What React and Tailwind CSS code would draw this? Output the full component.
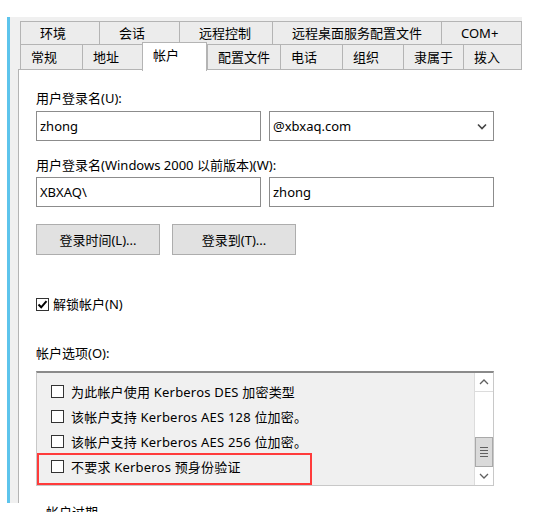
import React from 'react'

const row1 = [
  { label: '环境', w: 'w-[79px]' },
  { label: '会话', w: 'w-[80px]' },
  { label: '远程控制', w: 'w-[93px]' },
  { label: '远程桌面服务配置文件', w: 'w-[169px]' },
  { label: 'COM+', w: 'w-[81px]' },
]

const row2 = [
  { label: '常规', w: 'w-[62px]' },
  { label: '地址', w: 'w-[60px]' },
  { label: '帐户', w: 'w-[65px]', active: true },
  { label: '配置文件', w: 'w-[73px]' },
  { label: '电话', w: 'w-[62px]' },
  { label: '组织', w: 'w-[61px]' },
  { label: '隶属于', w: 'w-[60px]' },
  { label: '拨入', w: 'w-[59px]' },
]

const options = [
  '为此帐户使用 Kerberos DES 加密类型',
  '该帐户支持 Kerberos AES 128 位加密。',
  '该帐户支持 Kerberos AES 256 位加密。',
  '不要求 Kerberos 预身份验证',
]

function Box({ checked }) {
  return (
    <div className="w-[13px] h-[13px] shrink-0 border border-[#333333] bg-white flex items-center justify-center">
      {checked && (
        <svg width="11" height="11" viewBox="0 0 11 11">
          <path d="M1.5 5.5 L4.2 8.3 L9.5 2.2" fill="none" stroke="#000" strokeWidth="2" />
        </svg>
      )}
    </div>
  )
}

function Field({ children, combo }) {
  return (
    <div className="w-[225px] h-[30px] border border-[#8c8c8c] bg-white flex items-center pl-[3px] pr-[6px]">
      <span className="flex-1">{children}</span>
      {combo && (
        <svg width="10" height="7" viewBox="0 0 10 7">
          <path d="M1 1.5 L5 5.5 L9 1.5" fill="none" stroke="#444" strokeWidth="1.6" />
        </svg>
      )}
    </div>
  )
}

function Btn({ children }) {
  return (
    <div className="w-[124px] h-[31px] border border-[#adadad] bg-[#e1e1e1] flex items-center justify-center">
      {children}
    </div>
  )
}

export default function App() {
  return (
    <div
      className="w-[540px] h-[512px] overflow-hidden bg-white text-[13px] text-black leading-[18px]"
      style={{ fontFamily: '"Noto Sans", "Noto Sans CJK SC", sans-serif' }}
    >
      <div className="pt-[17px] pl-[7px] flex items-start">
        <div className="w-[3px] h-[486px] bg-[#5dc4ec]" />
        <div className="w-[512px] h-[486px] bg-[#f0f0f0] pt-[4px]">
          {/* tab rows */}
          <div className="pl-[10px]">
            <div className="flex h-[23px]">
              {row1.map((t, i) => (
                <div
                  key={t.label}
                  className={`${t.w} h-[23px] border-t border-l border-[#b4b4b4] bg-[#ececec] pl-[19px] flex items-center ${i === row1.length - 1 ? 'border-r' : ''}`}
                >
                  {t.label}
                </div>
              ))}
            </div>
            <div className="flex h-[25px] border-t border-[#b4b4b4]">
              {row2.map((t, i) =>
                t.active ? (
                  <div
                    key={t.label}
                    className={`${t.w} h-[29px] -mt-[3px] border-t border-l border-r border-[#b4b4b4] bg-white pl-[10px] pt-[3px] relative z-10`}
                  >
                    {t.label}
                  </div>
                ) : (
                  <div
                    key={t.label}
                    className={`${t.w} h-[24px] border-l border-[#b4b4b4] bg-[#ececec] pl-[10px] flex items-center ${i === row2.length - 1 ? 'border-r' : ''}`}
                  >
                    {t.label}
                  </div>
                )
              )}
            </div>
          </div>

          {/* page */}
          <div className="ml-[8px] h-[434px] bg-white border-l border-t border-[#b4b4b4] pl-[17px] pt-[19px]">
            <div>用户登录名(U):</div>
            <div className="flex gap-[8px] mt-[4px]">
              <Field>zhong</Field>
              <Field combo>@xbxaq.com</Field>
            </div>

            <div className="mt-[15px]">用户登录名(Windows 2000 以前版本)(W):</div>
            <div className="flex gap-[8px] mt-[3px]">
              <Field>XBXAQ\</Field>
              <Field>zhong</Field>
            </div>

            <div className="flex gap-[12px] mt-[17px]">
              <Btn>登录时间(L)...</Btn>
              <Btn>登录到(T)...</Btn>
            </div>

            <div className="flex items-center gap-[4px] mt-[40px] h-[18px]">
              <Box checked />
              <span>解锁帐户(N)</span>
            </div>

            <div className="mt-[31px]">帐户选项(O):</div>

            <div className="relative mt-[9px] w-[458px] h-[115px] bg-[#f0f0f0] border border-[#c8c8c8] border-t-2 border-t-[#8a8a8a] flex overflow-hidden">
              <div className="flex-1 overflow-hidden">
                <div className="-mt-[19px]">
                  <div className="h-[25px] flex items-center pl-[14px]">
                    <Box />
                  </div>
                  {options.map((o) => (
                    <div key={o} className="h-[25px] flex items-center pl-[14px] gap-[7px]">
                      <Box />
                      <span className="whitespace-nowrap tracking-[0.2px]">{o}</span>
                    </div>
                  ))}
                </div>
              </div>

              {/* scrollbar */}
              <div className="w-[19px] h-full bg-white border-l border-[#dcdcdc] flex flex-col">
                <div className="h-[19px] border-b border-[#dcdcdc] flex items-center justify-center">
                  <svg width="10" height="6" viewBox="0 0 10 6">
                    <path d="M1 5 L5 1 L9 5" fill="none" stroke="#606060" strokeWidth="1.3" />
                  </svg>
                </div>
                <div className="h-[45px]" />
                <div className="h-[30px] bg-[#dadada] border border-[#a9a9a9] flex flex-col items-center justify-center gap-[2px]">
                  <div className="w-[8px] h-[1px] bg-[#606060]" />
                  <div className="w-[8px] h-[1px] bg-[#606060]" />
                  <div className="w-[8px] h-[1px] bg-[#606060]" />
                  <div className="w-[8px] h-[1px] bg-[#606060]" />
                </div>
                <div className="flex-1 flex items-center justify-center">
                  <svg width="10" height="6" viewBox="0 0 10 6">
                    <path d="M1 1 L5 5 L9 1" fill="none" stroke="#606060" strokeWidth="1.3" />
                  </svg>
                </div>
              </div>

              {/* highlight annotation */}
              <div className="absolute left-0 top-[80px] w-[275px] h-[32px] border-2 border-[#ff3b3b]" />
            </div>

            <div className="mt-[17px] ml-[10px]">帐户过期</div>
          </div>
        </div>
      </div>
    </div>
  )
}
